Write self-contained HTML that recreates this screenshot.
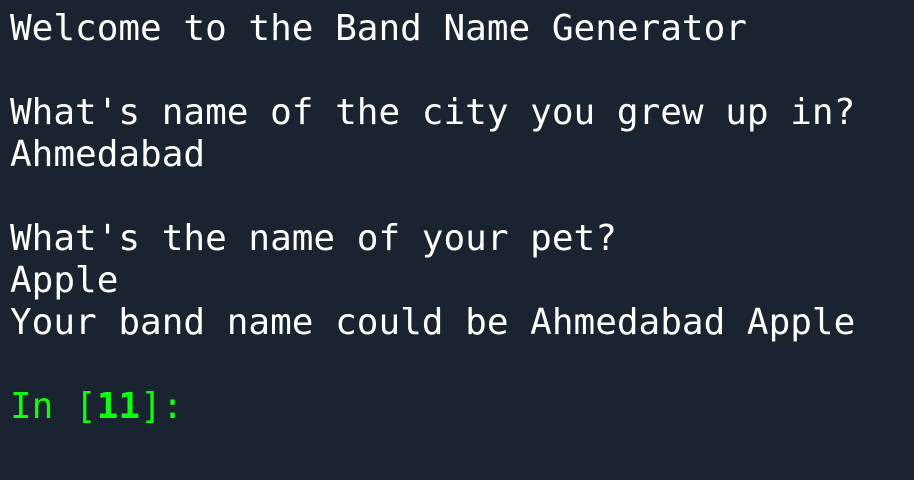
<!DOCTYPE html>
<html><head><style>
html,body{margin:0;padding:0;background:#1a2430;width:914px;height:480px;overflow:hidden}
pre{margin:0;position:absolute;left:10px;top:8px;font-family:"DejaVu Sans Mono","Liberation Mono",monospace;font-size:36px;line-height:42px;color:#fff}
.g{color:#0dff0d}
b{font-weight:bold}
</style></head><body>
<pre>Welcome to the Band Name Generator

What's name of the city you grew up in?
Ahmedabad

What's the name of your pet?
Apple
Your band name could be Ahmedabad Apple

<span class="g">In [<b>11</b>]:</span></pre>
</body></html>
